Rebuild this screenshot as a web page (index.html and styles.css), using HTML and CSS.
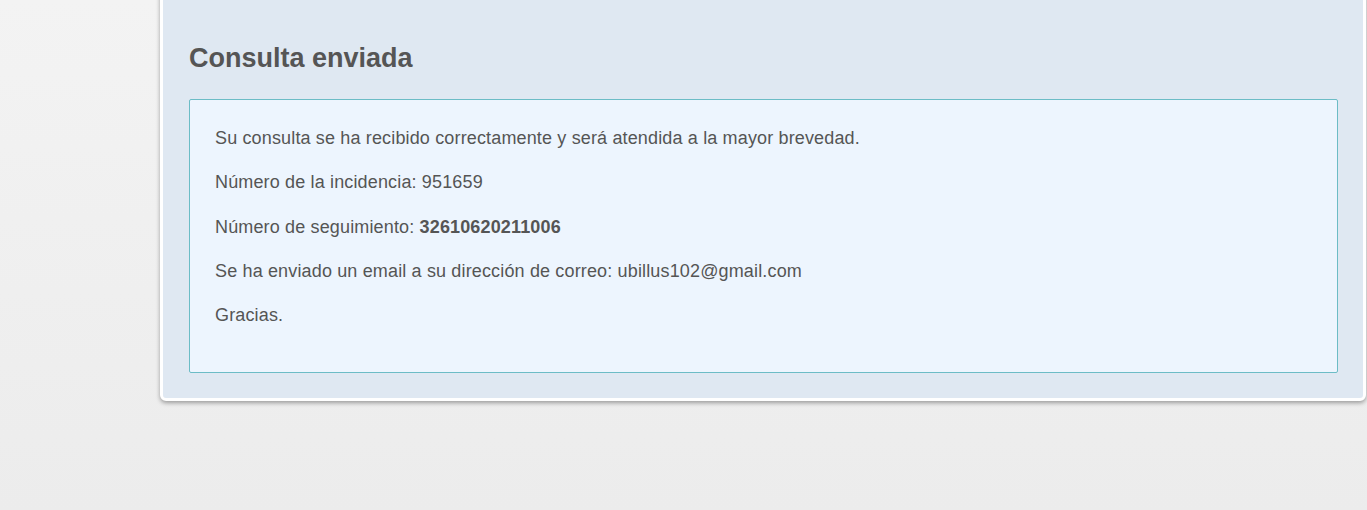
FILE: index.html
```html
<!DOCTYPE html>
<html lang="es">
<head>
<meta charset="utf-8">
<title>Consulta enviada</title>
<link rel="stylesheet" href="styles.css">
</head>
<body>
<div class="panel">
  <h2 class="title">Consulta enviada</h2>
  <div class="box">
    <p>Su consulta se ha recibido correctamente y será atendida a la mayor brevedad.</p>
    <p>Número de la incidencia: 951659</p>
    <p>Número de seguimiento: <strong>32610620211006</strong></p>
    <p>Se ha enviado un email a su dirección de correo: ubillus102@gmail.com</p>
    <p>Gracias.</p>
  </div>
</div>
</body>
</html>
```
FILE: styles.css
```css
html, body {
  margin: 0;
  padding: 0;
}
body {
  min-height: 510px;
  background: linear-gradient(to bottom, #f3f3f3 0px, #ececec 510px);
  font-family: "Liberation Sans", Arial, sans-serif;
  color: #555555;
}
.panel {
  margin-left: 160px;
  margin-top: -10px;
  padding: 10px 25px 25px 26px;
  box-sizing: content-box;
  width: 1149px;
  background: #dfe8f2;
  border: 3px solid #ffffff;
  border-radius: 0 0 6px 6px;
  box-shadow: 0 2px 4px rgba(0,0,0,0.35);
}
.title {
  margin: 0;
  padding-top: 40px;
  font-size: 27px;
  line-height: 30px;
  font-weight: bold;
  color: #555555;
  margin-bottom: 26px;
}
.box {
  background: #edf5fe;
  border: 1px solid #6cbcc6;
  border-radius: 2px;
  padding: 27px 25px 46px 25px;
}
.box p {
  margin: 0 0 22.3px 0;
  font-size: 18px;
  letter-spacing: 0.15px;
  line-height: 22px;
}
.box p:last-child {
  margin-bottom: 0;
}
.box strong {
  font-weight: bold;
}
```
